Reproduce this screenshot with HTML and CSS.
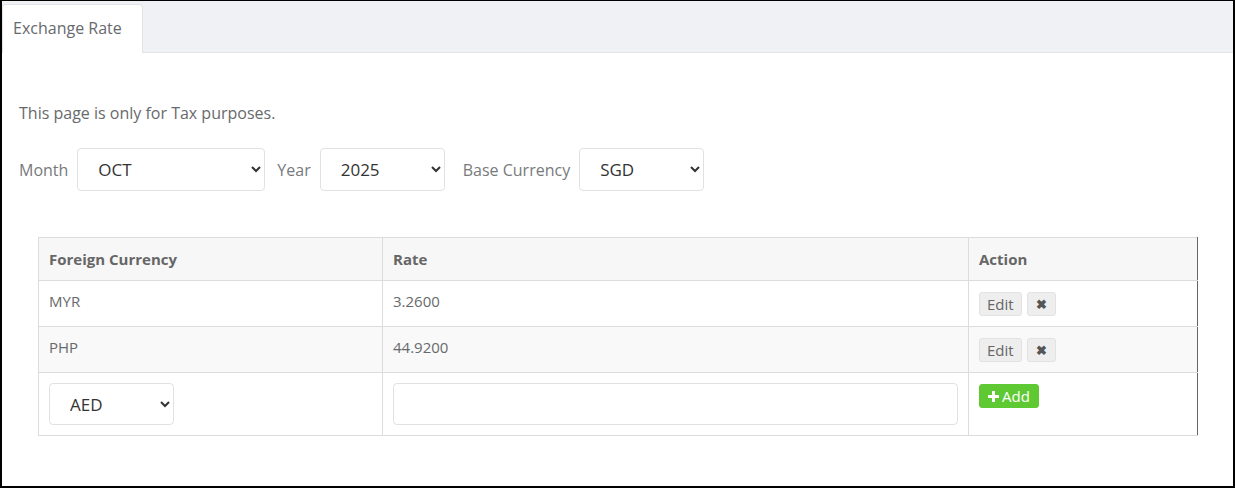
FILE: index.html
```html
<!DOCTYPE html>
<html>
<head>
    <title>Exchange Rate</title>
    <link rel="stylesheet" href="styles.css">
</head>
<body>
    <div class="frame">
        <div class="tabs">
            <div class="tab active">Exchange Rate</div>
        </div>
        <div class="panel">
            <p class="note">This page is only for Tax purposes.</p>
            <div class="filters">
                <label class="lbl">Month</label>
                <select class="ctl month">
                    <option>OCT</option>
                </select>
                <label class="lbl">Year</label>
                <select class="ctl short">
                    <option>2025</option>
                </select>
                <label class="lbl lbl-wide">Base Currency</label>
                <select class="ctl short">
                    <option>SGD</option>
                </select>
            </div>

            <table class="rates">
                <tr>
                    <th class="col-cur">Foreign Currency</th>
                    <th class="col-rate">Rate</th>
                    <th>Action</th>
                </tr>
                <tr>
                    <td>MYR</td>
                    <td>3.2600</td>
                    <td><button class="btn">Edit</button><button class="btn btn-x">&#10006;</button></td>
                </tr>
                <tr class="alt">
                    <td>PHP</td>
                    <td>44.9200</td>
                    <td><button class="btn">Edit</button><button class="btn btn-x">&#10006;</button></td>
                </tr>
                <tr>
                    <td><select class="ctl short"><option>AED</option></select></td>
                    <td><input type="text" class="ctl rate-input"></td>
                    <td>
                        <button class="btn btn-add">
                            <svg width="11" height="11" viewBox="0 0 11 11"><path d="M4 0h3v4h4v3H7v4H4V7H0V4h4z" fill="#fff"/></svg>Add
                        </button>
                    </td>
                </tr>
            </table>
        </div>
    </div>
</body>
</html>
```

FILE: styles.css
```css
html, body {
    margin: 0;
    padding: 0;
}
body {
    font-family: "Open Sans", Arial, sans-serif;
    color: #676a6c;
    background-color: #ffffff;
}
.frame {
    box-sizing: border-box;
    width: 1235px;
    height: 488px;
    border: 2px solid #000;
    border-top-width: 1px;
    overflow: hidden;
}
.tabs {
    display: flex;
    background-color: #f0f1f5;
    border-bottom: 1px solid #e3e4e8;
    height: 52px;
    box-sizing: border-box;
    padding-top: 3px;
}
.tab {
    background-color: #ffffff;
    border: 1px solid #e3e4e8;
    border-bottom: none;
    border-radius: 4px 4px 0 0;
    padding: 12px 19px 0 10px;
    font-size: 16px;
    margin-bottom: -1px;
    width: 110px;
    color: #676a6c;
}
.panel {
    padding: 0 17px;
}
.note {
    margin: 49px 0 0 0;
    font-size: 16px;
    line-height: 22px;
}
.filters {
    display: flex;
    align-items: center;
    margin-top: 24px;
}
.lbl {
    font-size: 16px;
    margin-right: 8px;
    color: #777a7c;
}
.lbl-wide {
    margin-left: 6px;
    margin-right: 8px;
}
.ctl {
    font-family: "Open Sans", Arial, sans-serif;
    font-size: 17px;
    color: #333;
    border: 1px solid #e1e1e1;
    border-radius: 4px;
    background-color: #fff;
    box-sizing: border-box;
    height: 43px;
    padding: 0 8px 0 16px;
}
.filters .ctl {
    margin-right: 12px;
}
.month {
    width: 188px;
    margin-left: 1px;
}
.short {
    width: 125px;
}
.filters .short {
    margin-left: 1px;
}
.rates {
    border-collapse: collapse;
    margin: 46px 0 0 19px;
    width: 1160px;
    font-size: 15px;
    border-right: 1px solid #666;
}
.rates th, .rates td {
    border: 1px solid #dcdcdc;
    text-align: left;
    vertical-align: top;
    padding: 10px 10px;
    line-height: 21px;
}
.rates th:last-child, .rates td:last-child {
    border-right: 1px solid #666;
}
.rates th {
    background-color: #f7f7f7;
    font-weight: bold;
    padding: 11px 10px 10px;
    color: #666;
}
.col-cur {
    width: 323px;
}
.col-rate {
    width: 565px;
}
.rates tr.alt td {
    background-color: #f9f9f9;
}
.rates td .ctl {
    height: 42px;
}
.rate-input {
    width: 565px;
    padding: 0 10px;
}
.btn {
    font-family: "Open Sans", Arial, sans-serif;
    font-size: 15px;
    height: 24px;
    padding: 0 7px;
    margin-right: 5px;
    background-color: #eeeeee;
    color: #666;
    border: 1px solid #e2e2e2;
    border-radius: 3px;
    vertical-align: top;
    margin-top: 1px;
}
.btn-x {
    width: 29px;
    font-size: 13px;
    font-weight: bold;
    color: #555;
}
.btn-add {
    background-color: #5ec933;
    border-color: #5ec933;
    color: #fff;
    display: inline-flex;
    align-items: center;
    gap: 3px;
    padding: 0 8px 0 8px;
    margin-top: 1px;
}
```
